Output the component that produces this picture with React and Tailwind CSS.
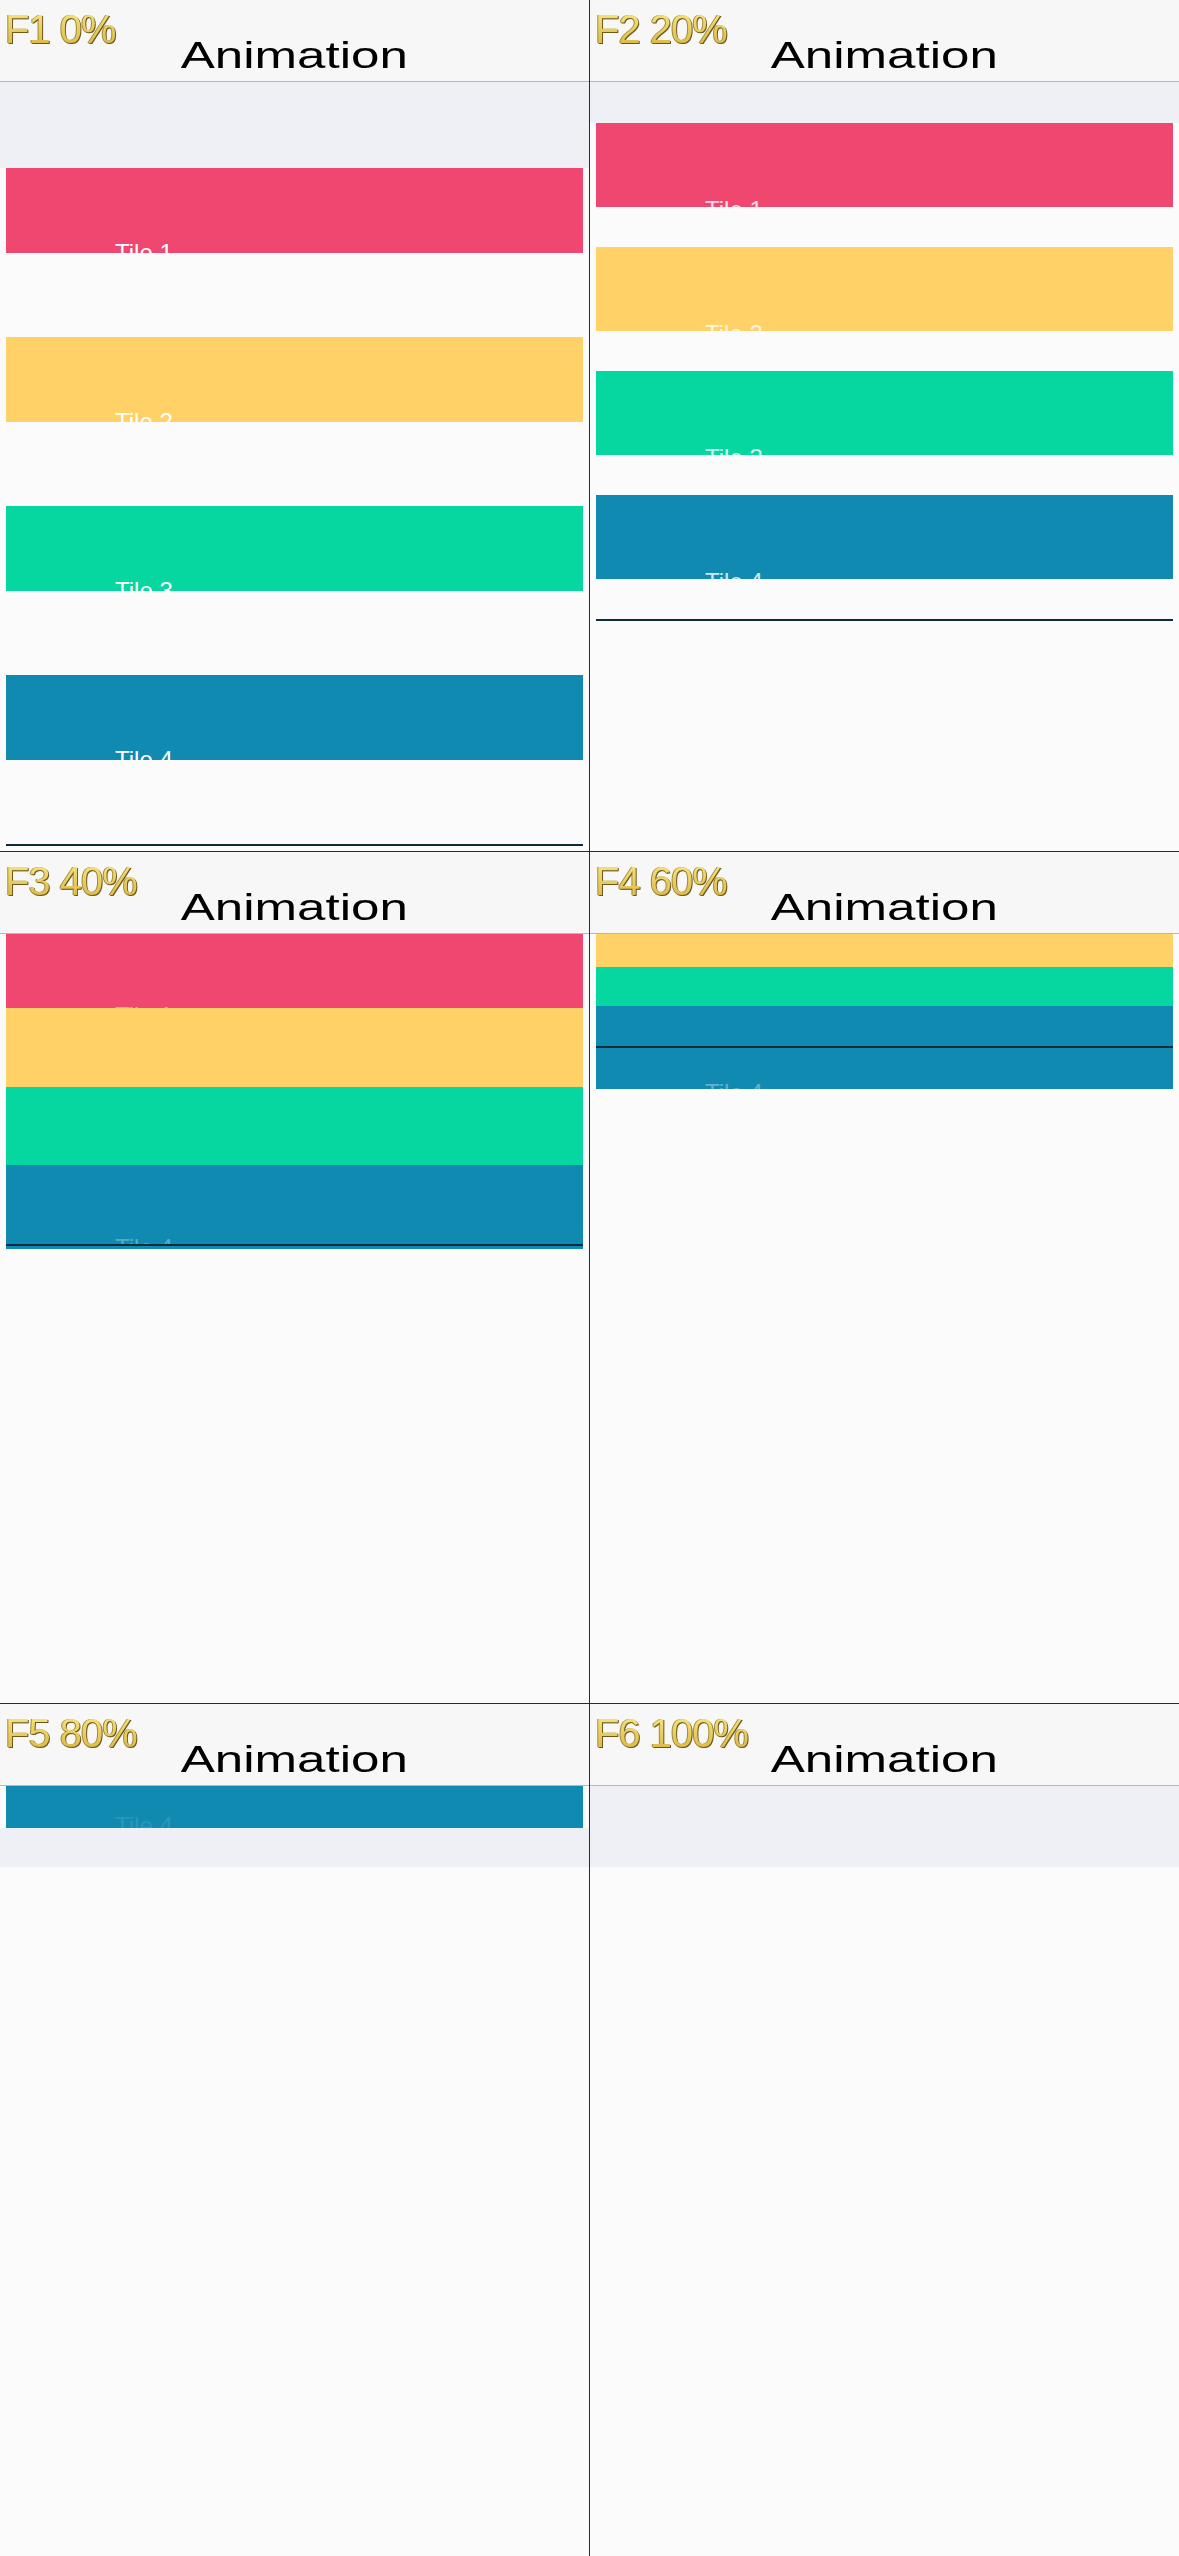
import React from 'react';

function Tile({ className, label, textClass = '-mb-[12px] text-white' }) {
  return (
    <div className={`mx-[6px] shrink-0 flex flex-col justify-end overflow-hidden pl-[109px] ${className}`}>
      <span className={`block text-[24px] leading-none ${textClass}`}>{label}</span>
    </div>
  );
}

function DarkLine() {
  return <div className="mx-[6px] h-[2px] shrink-0 bg-[#0b2c3d]" />;
}

function Frame({ label, className, children }) {
  return (
    <div className={`h-[852px] flex flex-col overflow-hidden bg-[#fbfbfc] ${className}`}>
      {/* header */}
      <div className="relative h-[82px] shrink-0 bg-[#f7f7f8] border-b border-[#b6b6be]">
        <span className="absolute left-[5px] top-[9px] text-[40px] leading-none tracking-[-1px] bg-linear-to-b from-[#f8e782] to-[#d9b441] bg-clip-text text-transparent [filter:drop-shadow(1px_1px_0_#6e5819)_drop-shadow(-0.5px_0_0_#a08a3a)]">
          {label}
        </span>
        <div className="flex justify-center pt-[37px]">
          <span className="inline-block text-[37px] leading-none text-black scale-x-[1.38]">Animation</span>
        </div>
      </div>
      {/* list */}
      <div className="flex flex-col">{children}</div>
    </div>
  );
}

export default function App() {
  return (
    <div className="w-[1179px] h-[2556px] grid grid-cols-[590px_589px] bg-[#fbfbfc] font-['Liberation_Sans',Arial,sans-serif]">
      {/* F1 */}
      <Frame label="F1 0%" className="border-r border-b border-[#2b2b2b]">
        <div className="h-[86px] shrink-0 bg-[#efeff6]" />
        <div className="flex flex-col gap-[84px]">
          <Tile className="h-[85px] bg-[#ef476f]" label="Tile 1" />
          <Tile className="h-[85px] bg-[#ffd166]" label="Tile 2" />
          <Tile className="h-[85px] bg-[#06d6a0]" label="Tile 3" />
          <Tile className="h-[85px] bg-[#118ab2]" label="Tile 4" />
          <DarkLine />
        </div>
      </Frame>

      {/* F2 */}
      <Frame label="F2 20%" className="border-b border-[#2b2b2b]">
        <div className="h-[41px] shrink-0 bg-[#efeff6]" />
        <div className="flex flex-col gap-[40px]">
          <Tile className="h-[84px] bg-[#ef476f]" label="Tile 1" textClass="-mb-[15px] text-white/80" />
          <Tile className="h-[84px] bg-[#ffd166]" label="Tile 2" textClass="-mb-[15px] text-white/80" />
          <Tile className="h-[84px] bg-[#06d6a0]" label="Tile 3" textClass="-mb-[15px] text-white/80" />
          <Tile className="h-[84px] bg-[#118ab2]" label="Tile 4" textClass="-mb-[15px] text-white/80" />
          <DarkLine />
        </div>
      </Frame>

      {/* F3 */}
      <Frame label="F3 40%" className="border-r border-b border-[#2b2b2b]">
        <Tile className="h-[74px] bg-[#ef476f]" label="Tile 1" textClass="-mb-[20px] text-white/50" />
        <Tile className="h-[79px] bg-[#ffd166]" label="Tile 2" textClass="-mb-[21px] text-white/40" />
        <Tile className="h-[78px] bg-[#06d6a0]" label="Tile 3" textClass="-mb-[21px] text-white/40" />
        <Tile className="h-[79px] bg-[#118ab2]" label="Tile 4" textClass="-mb-[16px] text-white/30" />
        <DarkLine />
        <div className="mx-[6px] h-[3px] shrink-0 bg-[#118ab2]" />
      </Frame>

      {/* F4 */}
      <Frame label="F4 60%" className="border-b border-[#2b2b2b]">
        <div className="mx-[6px] h-[33px] shrink-0 bg-[#ffd166]" />
        <div className="mx-[6px] h-[39px] shrink-0 bg-[#06d6a0]" />
        <div className="mx-[6px] h-[40px] shrink-0 bg-[#118ab2]" />
        <DarkLine />
        <Tile className="h-[41px] bg-[#118ab2]" label="Tile 4" textClass="-mb-[16px] text-white/35" />
      </Frame>

      {/* F5 */}
      <Frame label="F5 80%" className="border-r border-[#2b2b2b]">
        <Tile className="h-[42px] bg-[#118ab2]" label="Tile 4" textClass="-mb-[10px] text-white/10" />
        <div className="h-[39px] shrink-0 bg-[#efeff6]" />
      </Frame>

      {/* F6 */}
      <Frame label="F6 100%" className="">
        <div className="h-[81px] shrink-0 bg-[#efeff6]" />
      </Frame>
    </div>
  );
}
